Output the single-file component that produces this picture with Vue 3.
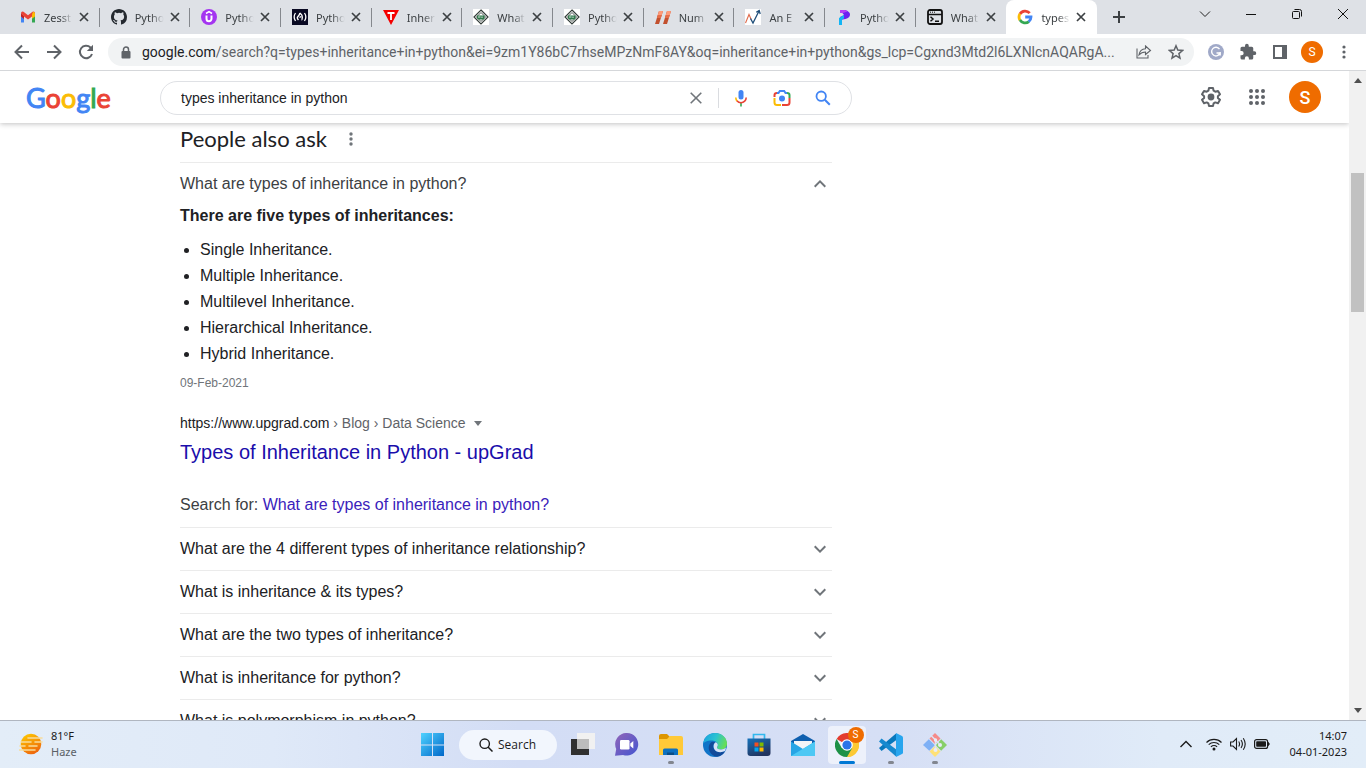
<script setup>
import { ref } from 'vue'

const query = ref('types inheritance in python')

const diamond = '<rect width="16" height="16" fill="#fff"/><path d="M8 1l7 7-7 7-7-7z" fill="none" stroke="#333d39" stroke-width="1.200"/><path d="M8 3.500L12.500 8 8 12.500 3.500 8z" fill="none" stroke="#4b5551" stroke-width="1"/><path d="M4 6.500h7.500v2.500q0 1.500-2 1.500H6q-2 0-2-2z" fill="#2f7a4b"/><path d="M5 8h2.500M9 7.500v1.500" stroke="#dcebe2" stroke-width="1"/>'
const googleG = '<g fill="none" stroke-width="2.800"><path d="M12.700 4.200A6 6 0 0 0 3 5" stroke="#ea4335"/><path d="M3 4.800a6 6 0 0 0 0 6.400" stroke="#fbbc05"/><path d="M3 11a6 6 0 0 0 8.900 1.600" stroke="#34a853"/><path d="M11.700 12.700A6 6 0 0 0 14 8H8.200" stroke="#4285f4"/></g>'

const tabs = [
  { title: 'Zesst', icon: '<path d="M1 3.500v10h3V8z" fill="#4285f4"/><path d="M15 3.500v10h-3V8z" fill="#34a853"/><path d="M1 4.500L4 7v3L1 7.500z" fill="#c5221f"/><path d="M1 4.500Q1 2 3.500 2.800L8 6.300l4.500-3.500Q15 2 15 4.500L12 7.500 8 10.500 4 7.500z" fill="#ea4335"/><path d="M12 5.500l1-2.500q2-.5 2 1.500v3l-3 2.300z" fill="#fbbc04"/>' },
  { title: 'Pytho', icon: '<path fill="#24292f" d="M8 0C3.580 0 0 3.580 0 8c0 3.540 2.290 6.530 5.470 7.590.4.070.55-.17.55-.38 0-.19-.01-.82-.01-1.490-2.010.37-2.530-.49-2.690-.94-.09-.23-.48-.94-.82-1.130-.28-.15-.68-.52-.01-.53.63-.01 1.080.58 1.230.82.72 1.210 1.870.87 2.330.66.07-.52.28-.87.51-1.070-1.780-.2-3.640-.89-3.640-3.950 0-.87.31-1.590.82-2.150-.08-.2-.36-1.020.08-2.120 0 0 .67-.21 2.200.82a7.600 7.600 0 0 1 4 0c1.530-1.040 2.200-.82 2.200-.82.44 1.100.16 1.920.08 2.120.51.56.82 1.270.82 2.150 0 3.070-1.870 3.750-3.650 3.950.29.25.54.73.54 1.480 0 1.070-.01 1.930-.01 2.200 0 .21.15.46.55.38A8 8 0 0 0 16 8c0-4.420-3.580-8-8-8z"/>' },
  { title: 'Pytho', icon: '<circle cx="8" cy="8" r="8" fill="#a435f0"/><path d="M5.500 6.500v3.200a2.500 2.500 0 0 0 5 0V6.500" fill="none" stroke="#fff" stroke-width="2"/><path d="M5 4.500l3-1.800 3 1.800" fill="none" stroke="#fff" stroke-width="1.500"/>' },
  { title: 'Pytho', icon: '<rect width="16" height="16" fill="#0a0a23"/><path d="M3.500 4Q.8 8 3.500 12M12.500 4q2.700 4 0 8" stroke="#fff" stroke-width="1.300" fill="none"/><path d="M8 4q-.5 2-2 3.500T6.500 11M8 4q2.500 2 2.300 4.500T9.500 11M7.500 8.500L9 7.500" stroke="#fff" stroke-width="1.400" fill="none"/>' },
  { title: 'Inher', icon: '<path d="M0 1h16L8 16z" fill="#f40000"/><path d="M4.500 4h7M8 4v7" stroke="#fff" stroke-width="1.800"/>' },
  { title: 'What', icon: diamond },
  { title: 'Pytho', icon: diamond },
  { title: 'Num', icon: '<path d="M4 2h4L4 15H0z" fill="#c2502e"/><path d="M12 2h4l-4 13H8z" fill="#c2502e"/><path d="M4 2h4L6.800 6h-4zM12 2h4l-1.200 4h-4z" fill="#ff9a78"/><path d="M2.800 6h4l-.9 3h-4zM10.800 6h4l-.9 3h-4z" fill="#e56d48"/>' },
  { title: 'An E', icon: '<rect width="16" height="16" fill="#fff"/><path d="M.5 14L4 5.500l2.200 5" fill="none" stroke="#e06a4c" stroke-width="1.100"/><path d="M5.500 9.500L8 14l2.500-5L14 2M11.200 3.200l3-1.700 1 3.500" fill="none" stroke="#1f4e79" stroke-width="1.300"/>' },
  { title: 'Pytho', icon: '<path d="M4 1h5q5 1.500 5 4.500T9.500 10L4 11V8l4-2z" fill="#6d1ff0"/><path d="M4 1h5l2.500 1.500L7 4H4z" fill="#b83cf5"/><path d="M3 9l5-3v3.500l-2 1V16H3z" fill="#12b5f5"/>' },
  { title: 'What', icon: '<rect x="1" y="1" width="14" height="14" rx="2" fill="none" stroke="#111" stroke-width="1.800"/><path d="M1 5.500h14" stroke="#111" stroke-width="1.500"/><path d="M3 3.200h1M5 3.200h1M7 3.200h1" stroke="#111" stroke-width="1"/><path d="M3.500 7.800L6 10l-2.500 2.200M8 12.200h4" fill="none" stroke="#111" stroke-width="1.500"/>' },
  { title: 'types', icon: googleG, active: true }
]

const answers = ['Single', 'Multiple', 'Multilevel', 'Hierarchical', 'Hybrid']

const questions = [
  'What are the 4 different types of inheritance relationship?',
  'What is inheritance & its types?',
  'What are the two types of inheritance?',
  'What is inheritance for python?',
  'What is polymorphism in python?'
]
</script>

<template>
  <div class="desktop">
    <div class="tabstrip">
      <div class="tabs">
        <div v-for="(tab, i) in tabs" :key="i" class="tab" :class="{ active: tab.active, last: i === tabs.length - 2 }">
          <svg class="favicon" viewBox="0 0 16 16" aria-hidden="true" v-html="tab.icon"></svg>
          <span class="tab-title">{{ tab.title }}</span>
          <button class="tab-close" aria-label="Close tab">
            <svg width="10" height="10" viewBox="0 0 10 10"><path d="M1 1l8 8M9 1L1 9" stroke="#3c4043" stroke-width="1.700" /></svg>
          </button>
        </div>
      </div>
      <button class="new-tab" aria-label="New tab">
        <svg width="12" height="12" viewBox="0 0 12 12"><path d="M6 0v12M0 6h12" stroke="#3c4043" stroke-width="2" /></svg>
      </button>
      <div class="window-controls">
        <button aria-label="Search tabs"><svg width="12" height="12" viewBox="0 0 12 12"><path d="M1 3.500l5 5 5-5" fill="none" stroke="#222" /></svg></button>
        <button aria-label="Minimize"><svg width="12" height="12" viewBox="0 0 12 12"><path d="M1 6.500h10" stroke="#111" /></svg></button>
        <button aria-label="Restore"><svg width="12" height="12" viewBox="0 0 12 12"><rect x="1.500" y="3.500" width="7" height="7" rx="1" fill="none" stroke="#111" /><path d="M3.500 1.500h5a2 2 0 0 1 2 2v5" fill="none" stroke="#111" /></svg></button>
        <button aria-label="Close"><svg width="12" height="12" viewBox="0 0 12 12"><path d="M1 1l10 10M11 1L1 11" stroke="#111" /></svg></button>
      </div>
    </div>

    <div class="toolbar">
      <button class="tool" aria-label="Back"><svg width="16" height="16" viewBox="0 0 16 16"><path d="M15 8H2M8 1.500L1.500 8 8 14.500" fill="none" stroke="#5f6368" stroke-width="2" /></svg></button>
      <button class="tool" aria-label="Forward"><svg width="16" height="16" viewBox="0 0 16 16"><path d="M1 8h13M8 1.500L14.500 8 8 14.500" fill="none" stroke="#5f6368" stroke-width="2" /></svg></button>
      <button class="tool" aria-label="Reload"><svg width="16" height="16" viewBox="0 0 16 16"><path d="M14 10a6.200 6.200 0 1 1-1.500-6.500L14 5" fill="none" stroke="#5f6368" stroke-width="2" /><path d="M15 .8V7H8.800z" fill="#5f6368" /></svg></button>
      <div class="omnibox">
        <svg class="lock" width="10" height="13" viewBox="0 0 10 13"><path d="M2.500 5.500V3.500a2.500 2.500 0 0 1 5 0v2" fill="none" stroke="#5f6368" stroke-width="1.500" /><rect x="0.500" y="5" width="9" height="7.500" rx="1" fill="#5f6368" /></svg>
        <span class="address"><b>google.com</b>/search?q=types+inheritance+in+python&amp;ei=9zm1Y86bC7rhseMPzNmF8AY&amp;oq=inheritance+in+python&amp;gs_lcp=Cgxnd3Mtd2l6LXNlcnAQARgA...</span>
        <button class="tool" aria-label="Share"><svg width="16" height="14" viewBox="0 0 16 14"><path d="M1 3.500V13h11v-3M9.500 1l5 4.500-5 4V7Q5.500 7 3 9.800 4 4 9.500 3.800z" fill="none" stroke="#5f6368" stroke-width="1.100" /></svg></button>
        <button class="tool" aria-label="Bookmark"><svg width="16" height="16" viewBox="0 0 16 16"><path d="M8 1.800l1.800 4.300 4.700.4-3.600 3.100 1.100 4.600L8 11.700l-4 2.500 1.100-4.600L1.500 6.500l4.700-.4z" fill="none" stroke="#5f6368" stroke-width="1.500" /></svg></button>
      </div>
      <button class="tool" aria-label="Grammar extension"><svg width="16" height="16" viewBox="0 0 16 16"><circle cx="8" cy="8" r="8" fill="#a0a9c8" /><path d="M11.500 5.200A4.300 4.300 0 1 0 12 9H8.500M12.200 8v3.500" fill="none" stroke="#fff" stroke-width="1.400" /></svg></button>
      <button class="tool" aria-label="Extensions"><svg width="18" height="18" viewBox="0 0 24 24"><path fill="#5f6368" d="M20.500 11H19V7a2 2 0 0 0-2-2h-4V3.500a2.500 2.500 0 0 0-5 0V5H4a2 2 0 0 0-2 2v3.800h1.500a2.700 2.700 0 0 1 0 5.400H2V20a2 2 0 0 0 2 2h3.800v-1.500a2.700 2.700 0 0 1 5.400 0V22H17a2 2 0 0 0 2-2v-4h1.500a2.500 2.500 0 0 0 0-5z" /></svg></button>
      <button class="tool" aria-label="Side panel"><svg width="14" height="14" viewBox="0 0 14 14"><rect x="1" y="1" width="12" height="12" fill="none" stroke="#5f6368" stroke-width="2" /><path d="M9 1h4v12H9z" fill="#5f6368" /></svg></button>
      <button class="tool" aria-label="Profile"><span class="avatar small">S</span></button>
      <button class="tool" aria-label="Menu"><svg width="4" height="14" viewBox="0 0 4 14" fill="#5f6368"><circle cx="2" cy="2" r="1.600" /><circle cx="2" cy="7" r="1.600" /><circle cx="2" cy="12" r="1.600" /></svg></button>
    </div>

    <div class="viewport">
      <div class="page">
        <header class="site-header">
          <a class="logo" href="#" aria-label="Google"><span class="blue">G</span><span class="red">o</span><span class="yellow">o</span><span class="blue">g</span><span class="green">l</span><span class="red">e</span></a>
          <form class="search" @submit.prevent>
            <input v-model="query" aria-label="Search" type="text" />
            <button type="button" class="clear" aria-label="Clear"><svg width="12" height="12" viewBox="0 0 12 12"><path d="M.7.700l10.600 10.600M11.300.700L.7 11.300" stroke="#70757a" stroke-width="1.600" /></svg></button>
            <button type="button" aria-label="Search by voice"><svg width="14" height="18" viewBox="0 0 14 18"><rect x="4.500" y="1" width="5" height="9.500" rx="2.500" fill="#4285f4" /><path d="M6.200 14h1.600v3.500H6.200z" fill="#34a853" /><path d="M3 12Q1.800 10.500 1.800 8.500" fill="none" stroke="#fbbc04" stroke-width="1.600" /><path d="M2.900 11.800Q4.500 13.700 7 13.700a5.200 5.200 0 0 0 5.200-5.200" fill="none" stroke="#ea4335" stroke-width="1.600" /></svg></button>
            <button type="button" aria-label="Search by image"><svg width="18" height="18" viewBox="0 0 18 18"><path d="M1.500 8V6q0-2 2.500-2h1" fill="none" stroke="#ea4335" stroke-width="2" /><path d="M4 4h1.500l1.300-2h4.400l1.300 2H14" fill="none" stroke="#4285f4" stroke-width="2" /><path d="M14 4q2.500 0 2.500 2v3" fill="none" stroke="#34a853" stroke-width="2" /><path d="M16.500 9v4.500q0 2.500-2.500 2.500H9" fill="none" stroke="#ea4335" stroke-width="2" /><path d="M1.500 9v4.500Q1.500 16 4 16h4" fill="none" stroke="#fbbc04" stroke-width="2" /><circle cx="9" cy="9.500" r="3" fill="#4285f4" /></svg></button>
            <button type="submit" aria-label="Google Search"><svg width="16" height="16" viewBox="0 0 16 16"><circle cx="6.200" cy="6.200" r="4.700" fill="none" stroke="#4285f4" stroke-width="1.800" /><path d="M9.800 9.800l5 5" stroke="#4285f4" stroke-width="2" /></svg></button>
          </form>
          <nav class="account">
            <button aria-label="Quick settings"><svg width="24" height="24" viewBox="0 0 24 24"><path d="M10 3h4l.6 2.700 1.700 1 2.700-.8 2 3.400-2.100 1.900v1.700l2.100 1.900-2 3.400-2.700-.8-1.700 1L14 21h-4l-.6-2.600-1.700-1-2.700.8-2-3.400 2.100-1.900v-1.700L3 9.300l2-3.400 2.700.8 1.700-1z" fill="none" stroke="#5f6368" stroke-width="2" stroke-linejoin="round" /><circle cx="12" cy="12" r="3.400" fill="#5f6368" /></svg></button>
            <button aria-label="Google apps"><svg width="16" height="16" viewBox="0 0 16 16" fill="#5f6368"><template v-for="y in 3" :key="y"><circle v-for="x in 3" :key="x" :cx="x * 6 - 4" :cy="y * 6 - 4" r="2" /></template></svg></button>
            <button class="me" aria-label="Google account"><span class="avatar">S</span></button>
          </nav>
        </header>

        <main class="results">
          <div class="heading">
            <h2>People also ask</h2>
            <button aria-label="About this result"><svg width="4" height="14" viewBox="0 0 4 14" fill="#70757a"><circle cx="2" cy="2" r="1.700" /><circle cx="2" cy="7" r="1.700" /><circle cx="2" cy="12" r="1.700" /></svg></button>
          </div>
          <section class="answer">
            <button class="question open">
              <span>What are types of inheritance in python?</span>
              <svg width="12" height="8" viewBox="0 0 12 8"><path d="M.7 6.700L6 1.400l5.300 5.300" fill="none" stroke="#70757a" stroke-width="2" /></svg>
            </button>
            <h3>There are five types of inheritances:</h3>
            <ul>
              <li v-for="kind in answers" :key="kind">{{ kind }} Inheritance.</li>
            </ul>
            <time>09-Feb-2021</time>
            <div class="source">
              <cite>https://www.upgrad.com<span> › Blog › Data Science</span></cite>
              <svg width="8" height="5" viewBox="0 0 8 5"><path d="M0 0h8L4 5z" fill="#70757a" /></svg>
            </div>
            <a class="result-title" href="#">Types of Inheritance in Python - upGrad</a>
            <p class="search-for">Search for: <a href="#">What are types of inheritance in python?</a></p>
          </section>
          <button v-for="q in questions" :key="q" class="question">
            <span>{{ q }}</span>
            <svg width="12" height="8" viewBox="0 0 12 8"><path d="M.7 1.300L6 6.600l5.300-5.300" fill="none" stroke="#70757a" stroke-width="2" /></svg>
          </button>
        </main>
      </div>
      <div class="scrollbar" aria-hidden="true">
        <svg width="8" height="5" viewBox="0 0 8 5"><path d="M4 0l4 5H0z" fill="#505050" /></svg>
        <div class="track"><div class="thumb"></div></div>
        <svg width="8" height="5" viewBox="0 0 8 5"><path d="M0 0h8L4 5z" fill="#505050" /></svg>
      </div>
    </div>

    <footer class="taskbar">
      <div class="weather">
        <svg width="24" height="22" viewBox="0 0 24 22">
          <defs><linearGradient id="sun" x1="0" y1="0" x2="0.500" y2="1"><stop offset="0" stop-color="#ffd000" /><stop offset="1" stop-color="#ef6a0c" /></linearGradient></defs>
          <circle cx="12" cy="11" r="10.300" fill="url(#sun)" />
          <g stroke="#f8dc9c" stroke-width="1.600" stroke-linecap="round"><path d="M9 5h14M2 9h10M16 9h7M1 13h5M10 13h8M0 17h16" /></g>
        </svg>
        <div class="lines"><span>81°F</span><span class="muted">Haze</span></div>
      </div>

      <div class="apps">
        <button class="app" aria-label="Start">
          <svg width="24" height="24" viewBox="0 0 24 24"><defs><linearGradient id="win" x1="0" y1="0" x2="1" y2="1"><stop offset="0" stop-color="#4fd2ff" /><stop offset="1" stop-color="#0067c9" /></linearGradient></defs><path d="M1 0h11v11.500H1zM13 0h11v11.500H13zM1 12.500h11V23H1zM13 12.500h11V23H13z" fill="url(#win)" /></svg>
        </button>
        <button class="pill">
          <svg width="14" height="14" viewBox="0 0 14 14"><circle cx="5.700" cy="5.700" r="4.700" fill="none" stroke="#1b1b1b" stroke-width="1.400" /><path d="M9 9l4.500 4.500" stroke="#1b1b1b" stroke-width="1.500" /></svg>
          Search
        </button>
        <button class="app" aria-label="Task view">
          <svg width="24" height="24" viewBox="0 0 24 24"><rect x="0" y="6" width="18" height="16" fill="#303030" /><rect x="6" y="0" width="18" height="16" fill="#f1f1f1" /><rect x="6" y="6" width="12" height="10" fill="#bcbcbc" /></svg>
        </button>
        <button class="app" aria-label="Chat">
          <svg width="24" height="24" viewBox="0 0 24 24"><defs><linearGradient id="chat" x1="0" y1="0" x2="1" y2="1"><stop offset="0" stop-color="#9265b8" /><stop offset="1" stop-color="#4355d0" /></linearGradient></defs><path d="M12 0a11.300 11.300 0 1 1-4 21.900L0 22.800 1.200 16A11.300 11.300 0 0 1 12 0z" fill="url(#chat)" /><rect x="5" y="7" width="9.500" height="9.500" rx="1.200" fill="#fff" /><path d="M15.300 10.500l3-2.500v7.500l-3-2.500z" fill="#fff" /></svg>
        </button>
        <button class="app running" aria-label="File Explorer">
          <svg width="24" height="24" viewBox="0 0 24 24"><path d="M0 3q0-2 2-2h6l3 3-3 3H0z" fill="#dd9500" /><path d="M0 6h8l3-3h11q2 0 2 2v17H0z" fill="#ffc938" /><path d="M4 22v-5q0-1.500 1.500-1.500h12q1.500 0 1.500 1.500v5z" fill="#0c70c0" /><path d="M8 19.500h7V22H8z" fill="#0a4d87" /></svg>
        </button>
        <button class="app" aria-label="Edge">
          <svg width="24" height="24" viewBox="0 0 24 24"><defs><linearGradient id="edge" x1="0" y1="0.200" x2="1" y2="0.500"><stop offset="0" stop-color="#1aa2df" /><stop offset="0.500" stop-color="#2bc3d2" /><stop offset="1" stop-color="#68df54" /></linearGradient></defs><circle cx="12" cy="12" r="12" fill="#1074c8" /><path d="M.3 10.500C1 4 6 0 12 0c7 0 12 5 12 10.500 0 4-3 6-6 6-2.500 0-4-1-4-2 0-1 1-1.500.8-3C14.500 9 11.500 7.500 8.500 7.500 4.500 7.500 1 9 .3 10.500z" fill="url(#edge)" /><path d="M8.500 9C5.500 11 4 17 9 21.500q2 2 5 2.200c4-.5 7-3 8-5.700-4 2-9 1.500-11-2-1.700-3-.6-5.500 1.500-6.300Q10.500 8.500 8.500 9z" fill="#124a9a" /><path d="M14.800 11.500c.2 1.500-.8 2-.8 3 0 1 1.500 2 4 2q3 0 5-2l-.8 3.500c-4 2-9 1.500-11-2C10 13 11 9.500 13 9.300q1.500 1 1.800 2.200z" fill="#d7e2f6" /></svg>
        </button>
        <button class="app" aria-label="Store">
          <svg width="24" height="24" viewBox="0 0 24 24"><defs><linearGradient id="store" x1="0" y1="0" x2="0.500" y2="1"><stop offset="0" stop-color="#1572bb" /><stop offset="1" stop-color="#22345f" /></linearGradient></defs><path d="M6.500 6V1.500h11V6" fill="none" stroke="#32b8ee" stroke-width="1.700" /><path d="M.5 5.500h23V20q0 3-3 3h-17q-3 0-3-3z" fill="url(#store)" /><path d="M7.500 9.500h4v4h-4z" fill="#f25022" /><path d="M12.500 9.500h4v4h-4z" fill="#7fba00" /><path d="M7.500 14.500h4v4h-4z" fill="#00a4ef" /><path d="M12.500 14.500h4v4h-4z" fill="#ffb900" /></svg>
        </button>
        <button class="app" aria-label="Mail">
          <svg width="24" height="24" viewBox="0 0 24 24"><path d="M0 8l12-7 12 7v8H0z" fill="#0f5fae" /><path d="M3 8h18v4l-9 6-9-6z" fill="#f4f5f7" /><path d="M0 8.500L12 16l12-7.500V23H0z" fill="#27a5e5" /><path d="M24 8.500V23H0z" fill="#4dc8f4" /></svg>
        </button>
        <button class="app current" aria-label="Chrome">
          <svg width="24" height="24" viewBox="0 0 24 24"><path d="M12 12L1.600 6A12 12 0 0 1 22.400 6z" fill="#e33b2e" /><path d="M12 12H23.900A12 12 0 0 1 12 24L12 12z" fill="#fcc934" /><path d="M22.400 6A12 12 0 0 1 12 24l5.200-9V6z" fill="#fcc934" /><path d="M1.600 6A12 12 0 0 0 12 24l5.200-9H6.800z" fill="#1e9146" /><circle cx="12" cy="12" r="5.800" fill="#fff" /><circle cx="12" cy="12" r="4.600" fill="#2a73e8" /></svg>
          <span class="badge">S</span>
        </button>
        <button class="app running" aria-label="Visual Studio Code">
          <svg width="24" height="24" viewBox="0 0 24 24"><path d="M17 .5L0 15l2.500 3L18 6.500z" fill="#0878bd" /><path d="M17 23.500L0 8.500l2.500-3L18 17z" fill="#1689cf" /><path d="M17 0l6 3q1 .5 1 1.500v15q0 1-1 1.500l-6 3V0z" fill="#28a5ee" /></svg>
        </button>
        <button class="app running" aria-label="Git">
          <svg width="24" height="24" viewBox="0 0 24 24"><path d="M12 0l5.500 5.500-5.500 5.500-5.500-5.500z" fill="#f58a88" /><path d="M5.800 6.300l6 6-5.500 5.500L0 12z" fill="#7eb0f5" /><path d="M18.200 6.300L24 12l-5.800 5.700-5.500-5.500z" fill="#87cf68" /><path d="M12 13l5.500 5.500L12 24l-5.500-5.500z" fill="#ffe177" /><path d="M8 2.500l8 8M12.500 7v10" stroke="#dce4f5" stroke-width="1.500" /><circle cx="12.500" cy="7" r="1.700" fill="#e8edf8" /><circle cx="17" cy="12" r="2" fill="#e8edf8" /><circle cx="12.500" cy="17" r="2" fill="#e8edf8" /></svg>
        </button>
      </div>

      <div class="tray">
        <button aria-label="Hidden icons"><svg width="12" height="8" viewBox="0 0 12 8"><path d="M.5 7L6 1.500 11.500 7" fill="none" stroke="#1b1b1b" stroke-width="1.400" /></svg></button>
        <button aria-label="Network"><svg width="16" height="14" viewBox="0 0 16 14"><g fill="none" stroke="#1b1b1b" stroke-width="1.100"><path d="M.5 5.500a10.500 10.500 0 0 1 15 0" /><path d="M2.700 7.700a7.500 7.500 0 0 1 10.600 0" /><path d="M4.900 9.900a4.400 4.400 0 0 1 6.200 0" /></g><circle cx="8" cy="12" r="1.500" fill="#1b1b1b" /></svg></button>
        <button aria-label="Volume"><svg width="16" height="14" viewBox="0 0 16 14"><path d="M.6 5H3l3.500-3.500v11L3 9H.6zM8.700 4.500q1.700 2.500 0 5M11 3q2.800 4 0 8M13.300 1.200q3.800 5.800 0 11.600" fill="none" stroke="#1b1b1b" stroke-width="1.100" /></svg></button>
        <button aria-label="Battery"><svg width="16" height="10" viewBox="0 0 16 10"><rect x="0.600" y="0.600" width="13" height="8.800" rx="2" fill="none" stroke="#1b1b1b" stroke-width="1.200" /><rect x="2.200" y="2.200" width="9.800" height="5.600" rx="0.800" fill="#1b1b1b" /><path d="M14.500 3.500q1.500 1.500 0 3z" fill="#1b1b1b" stroke="#1b1b1b" /></svg></button>
        <div class="lines clock"><span>14:07</span><span>04-01-2023</span></div>
      </div>
    </footer>
  </div>
</template>

<style>
body { margin: 0; overflow: hidden; }
</style>

<style scoped>
.desktop { height: 100vh; display: flex; flex-direction: column; overflow: hidden; background: #fff; color: #202124; font-family: "Liberation Sans", Arial, sans-serif; }
button { border: 0; padding: 0; margin: 0; background: none; font: inherit; color: inherit; display: flex; align-items: center; justify-content: center; flex-shrink: 0; }
svg { display: block; flex-shrink: 0; }
a { text-decoration: none; }

.tabstrip { flex: 0 0 34px; background: #dee1e6; display: flex; padding-left: 9px; font: 11px "Noto Sans", sans-serif; }
.tabs { flex: 0 1 1088px; min-width: 0; display: flex; }
.tab { position: relative; flex: 1 1 0; min-width: 0; height: 34px; display: flex; align-items: center; padding-left: 11px; box-sizing: border-box; color: #3c4043; }
.tab::after { content: ""; position: absolute; right: 0; top: 8px; width: 1px; height: 19px; background: #85888d; }
.tab.active::after, .tab.last::after { display: none; }
.tab.active { background: #fff; border-radius: 8px 8px 0 0; }
.favicon { width: 16px; height: 16px; }
.tab-title { width: 32px; margin-left: 8px; white-space: nowrap; mask-image: linear-gradient(to right, #000 50%, transparent 90%); }
.tab-close { width: 16px; height: 16px; }
.new-tab { width: 44px; }
.window-controls { margin-left: auto; display: flex; height: 28px; }
.window-controls button { width: 46px; }

.toolbar { flex: 0 0 37px; box-sizing: border-box; border-bottom: 1px solid #d5d7da; display: flex; align-items: center; padding: 0 6px; background: #fff; }
.tool { width: 32px; height: 28px; }
.omnibox { flex: 1; min-width: 0; height: 28px; margin: 0 6px; padding: 0 2px 0 13px; box-sizing: border-box; display: flex; align-items: center; border-radius: 14px; background: #f1f3f4; }
.address { flex: 1; min-width: 0; margin-left: 11px; overflow: hidden; white-space: nowrap; font: 14px/20px Roboto, sans-serif; color: #5f6368; }
.address b { font-weight: 400; color: #202124; }
.avatar { width: 32px; height: 32px; border-radius: 50%; background: #ef6c00; color: #fff; display: flex; align-items: center; justify-content: center; font: 500 18px Roboto, sans-serif; }
.avatar.small { width: 22px; height: 22px; font-size: 12px; font-weight: 400; }

.viewport { flex: 1; min-height: 0; display: flex; }
.page { flex: 1; min-width: 0; overflow: hidden; }
.site-header { position: relative; height: 52px; display: flex; align-items: center; background: #fff; box-shadow: 0 1px 5px rgba(32, 33, 36, 0.28); }
.logo { width: 134px; margin-left: 26px; padding-top: 2px; box-sizing: border-box; font: 27px/36px Lato, sans-serif; -webkit-text-stroke: 1px currentcolor; }
.blue { color: #4285f4; }
.red { color: #ea4335; }
.yellow { color: #fbbc05; }
.green { color: #34a853; }
.search { width: 692px; height: 34px; margin-top: 2px; box-sizing: border-box; border: 1px solid #dfe1e5; border-radius: 17px; display: flex; align-items: center; padding: 0 8px 0 20px; }
.search input { flex: 1; min-width: 0; border: 0; padding: 0; outline: none; background: none; color: #202124; font: 14px/20px "Liberation Sans", Arial, sans-serif; }
.search button { width: 41px; height: 32px; }
.search .clear { width: 45px; height: 20px; margin-right: 1px; border-right: 1px solid #dadce0; }
.account { margin-left: auto; margin-right: 24px; display: flex; gap: 6px; }
.account button { width: 40px; height: 40px; }
.account .me { margin-left: 2px; }

.results { width: 652px; margin-left: 180px; }
.heading { height: 39px; padding-bottom: 7px; box-sizing: border-box; display: flex; align-items: center; }
.heading h2 { margin: 0; font: 400 22px/28px Lato, sans-serif; }
.heading button { width: 48px; }
.answer { border-top: 1px solid #ebebeb; font-size: 16px; }
.question { width: 100%; height: 43px; box-sizing: border-box; border-top: 1px solid #ebebeb; padding-right: 6px; justify-content: space-between; text-align: left; font-size: 16px; }
.question.open { height: 41px; border: 0; color: #3c4043; }
h3 { margin: 0 0 9px; font: bold 16px/24px "Liberation Sans", Arial, sans-serif; }
ul { margin: 0 0 8px; padding-left: 20px; line-height: 26px; }
time { display: block; font-size: 12px; line-height: 16px; color: #70757a; }
.source { margin-top: 22px; display: flex; align-items: center; gap: 8px; font-size: 14px; line-height: 20px; }
cite { font-style: normal; }
cite span { color: #5f6368; }
.result-title { display: block; margin-top: 6px; font-size: 20px; line-height: 26px; color: #1a0dab; }
.search-for { margin: 28px 0 0; padding-bottom: 10px; line-height: 24px; color: #3c4043; }
.search-for a { color: #3a22bb; }

.scrollbar { flex: 0 0 17px; display: flex; flex-direction: column; align-items: center; justify-content: space-between; padding: 7px 0; box-sizing: border-box; background: #f1f1f1; }
.track { flex: 1; width: 13px; padding: 90px 0 0; }
.thumb { height: 26%; background: #c1c1c1; }

.taskbar { flex: 0 0 48px; box-sizing: border-box; border-top: 1px solid #b0b6c0; display: grid; grid-template-columns: 1fr auto 1fr; align-items: center; background: linear-gradient(to right, #e3edf8, #dfe9f8 20%, #d3ddf5 38%, #d6dff5 65%, #e0ebf8 85%, #e2edf8); color: #1b1b1b; font: 11px/16px "Noto Sans", sans-serif; }
.weather { display: flex; align-items: center; gap: 8px; padding: 0 0 2px 19px; }
.lines { display: flex; flex-direction: column; }
.muted { color: #5a5f66; }
.apps { display: flex; align-items: center; }
.app { position: relative; width: 44px; height: 40px; }
.app.running::after, .app.current::after { content: ""; position: absolute; bottom: 1px; left: 19px; width: 6px; height: 3px; border-radius: 2px; background: #82868f; }
.app.current::before { content: ""; position: absolute; inset: 1px 3px; border-radius: 4px; background: #edf1fb; }
.app.current svg { position: relative; }
.app.current::after { left: 14px; width: 16px; background: #0078d4; }
.badge { position: absolute; left: 23px; top: 2px; width: 16px; height: 16px; border-radius: 50%; background: #ef6c00; color: #fff; font: 10px/16px Roboto, sans-serif; text-align: center; }
.pill { width: 98px; height: 30px; margin: 0 4px 0 5px; gap: 5px; border-radius: 15px; background: #f2f6fd; font: 12px/16px "Open Sans", sans-serif; }
.tray { display: flex; align-items: center; justify-content: flex-end; padding: 0 19px 2px 0; }
.tray button { width: 24px; height: 32px; }
.tray button:first-child { width: 32px; }
.clock { width: 73px; text-align: right; }
</style>
